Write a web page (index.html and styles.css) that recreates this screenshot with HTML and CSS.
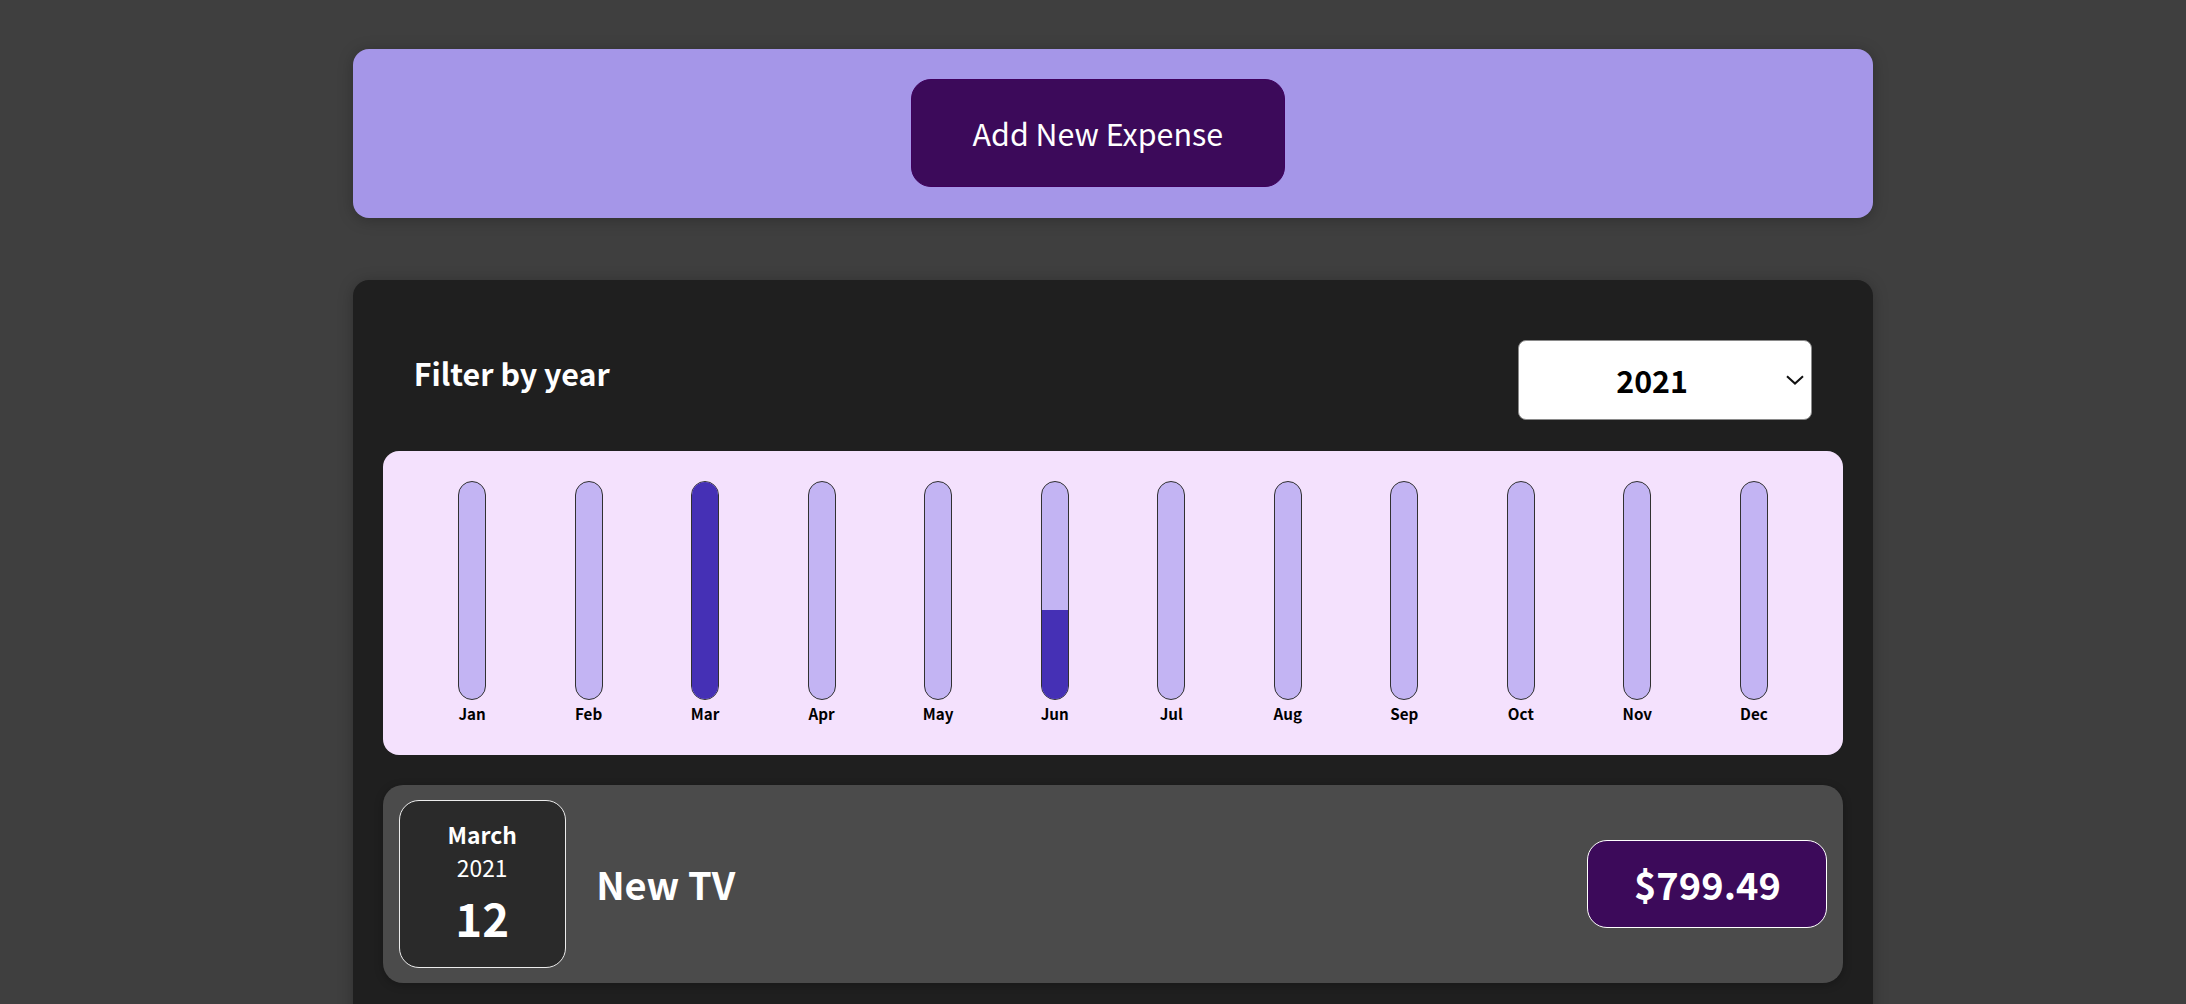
FILE: index.html
```html
<!DOCTYPE html>
<html lang="en">
<head>
<meta charset="utf-8">
<title>Expenses</title>
<link rel="stylesheet" href="styles.css">
</head>
<body>
<div class="new-expense">
  <button class="new-expense__btn" type="button">Add New Expense</button>
</div>

<div class="expenses">
  <div class="expenses-filter">
    <div class="expenses-filter__control">
      <label class="expenses-filter__label">Filter by year</label>
      <div class="year-select">
        <span class="year-select__value">2021</span>
        <svg class="year-select__chevron" width="18" height="10" viewBox="0 0 18 10"><path d="M1 1.2 L9 8.6 L17 1.2" fill="none" stroke="#111" stroke-width="2"/></svg>
      </div>
    </div>
  </div>

  <div class="chart">
    <div class="chart-bar"><div class="chart-bar__inner"><div class="chart-bar__fill" style="height:0%"></div></div><div class="chart-bar__label">Jan</div></div>
    <div class="chart-bar"><div class="chart-bar__inner"><div class="chart-bar__fill" style="height:0%"></div></div><div class="chart-bar__label">Feb</div></div>
    <div class="chart-bar"><div class="chart-bar__inner"><div class="chart-bar__fill" style="height:100%"></div></div><div class="chart-bar__label">Mar</div></div>
    <div class="chart-bar"><div class="chart-bar__inner"><div class="chart-bar__fill" style="height:0%"></div></div><div class="chart-bar__label">Apr</div></div>
    <div class="chart-bar"><div class="chart-bar__inner"><div class="chart-bar__fill" style="height:0%"></div></div><div class="chart-bar__label">May</div></div>
    <div class="chart-bar"><div class="chart-bar__inner"><div class="chart-bar__fill" style="height:41%"></div></div><div class="chart-bar__label">Jun</div></div>
    <div class="chart-bar"><div class="chart-bar__inner"><div class="chart-bar__fill" style="height:0%"></div></div><div class="chart-bar__label">Jul</div></div>
    <div class="chart-bar"><div class="chart-bar__inner"><div class="chart-bar__fill" style="height:0%"></div></div><div class="chart-bar__label">Aug</div></div>
    <div class="chart-bar"><div class="chart-bar__inner"><div class="chart-bar__fill" style="height:0%"></div></div><div class="chart-bar__label">Sep</div></div>
    <div class="chart-bar"><div class="chart-bar__inner"><div class="chart-bar__fill" style="height:0%"></div></div><div class="chart-bar__label">Oct</div></div>
    <div class="chart-bar"><div class="chart-bar__inner"><div class="chart-bar__fill" style="height:0%"></div></div><div class="chart-bar__label">Nov</div></div>
    <div class="chart-bar"><div class="chart-bar__inner"><div class="chart-bar__fill" style="height:0%"></div></div><div class="chart-bar__label">Dec</div></div>
  </div>

  <div class="expense-item">
    <div class="expense-date">
      <div class="expense-date__month">March</div>
      <div class="expense-date__year">2021</div>
      <div class="expense-date__day">12</div>
    </div>
    <div class="expense-item__description">
      <h2 class="expense-item__title">New TV</h2>
      <div class="expense-item__price">$799.49</div>
    </div>
  </div>
</div>
</body>
</html>
```

FILE: styles.css
```css
* {
  box-sizing: border-box;
}

html {
  font-family: "Noto Sans CJK JP", "Noto Sans", sans-serif;
  font-size: 30.4px;
}

body {
  margin: 0;
  background-color: #3f3f3f;
  overflow: hidden;
}

.new-expense {
  background-color: #a596e8;
  padding: 1rem;
  margin: 49px 0 0 353px;
  width: 1520px;
  border-radius: 16px;
  text-align: center;
  box-shadow: 0 2px 15px rgba(0, 0, 0, 0.25);
}

.new-expense__btn {
  font: inherit;
  cursor: pointer;
  padding: 1rem 2rem;
  border: 1px solid #40005d;
  background-color: #3c0a5a;
  color: white;
  border-radius: 20px;
  margin-right: 1rem;
  line-height: 45px;
  vertical-align: top;
}

.expenses {
  padding: 1rem;
  background-color: #1f1f1f;
  margin: 62px 0 0 353px;
  width: 1520px;
  border-radius: 16px;
  box-shadow: 0 2px 15px rgba(0, 0, 0, 0.25);
}

.expenses-filter {
  color: white;
  padding: 0 1rem;
}

.expenses-filter__control {
  display: flex;
  width: 100%;
  align-items: center;
  justify-content: space-between;
  margin: 1rem 0;
}

.expenses-filter__label {
  font-weight: bold;
  margin-bottom: 0.5rem;
}

.year-select {
  display: flex;
  align-items: center;
  width: 294px;
  height: 80px;
  padding: 0 7px 0 97px;
  background-color: #fff;
  color: #000;
  border: 1px solid #8a8a8a;
  border-radius: 8px;
  font-weight: bold;
}

.year-select__value {
  flex: 1;
}

.year-select__chevron {
  display: block;
}

.chart {
  padding: 1rem;
  border-radius: 16px;
  background-color: #f4e1fd;
  text-align: center;
  display: flex;
  justify-content: space-around;
  height: 10rem;
}

.chart-bar {
  height: 100%;
  flex: 1;
  display: flex;
  flex-direction: column;
  align-items: center;
}

.chart-bar__inner {
  height: 220px;
  width: 28px;
  border: 1px solid #313131;
  border-radius: 14px;
  background-color: #c3b4f3;
  overflow: hidden;
  display: flex;
  flex-direction: column;
  justify-content: flex-end;
}

.chart-bar__fill {
  background-color: #4530b5;
  width: 100%;
}

.chart-bar__label {
  font-weight: bold;
  font-size: 0.5rem;
  margin-top: 2px;
  color: #000;
}

.expense-item {
  display: flex;
  justify-content: space-between;
  align-items: center;
  box-shadow: 0 2px 8px rgba(0, 0, 0, 0.25);
  padding: 0.5rem;
  margin: 1rem 0;
  border-radius: 20px;
  background-color: #4b4b4b;
}

.expense-date {
  display: flex;
  flex-direction: column;
  width: 5.5rem;
  height: 5.5rem;
  border: 1px solid #ececec;
  background-color: #2a2a2a;
  color: white;
  border-radius: 20px;
  align-items: center;
  justify-content: center;
}

.expense-date__month {
  font-size: 0.75rem;
  font-weight: bold;
}

.expense-date__year {
  font-size: 0.75rem;
}

.expense-date__day {
  font-size: 1.5rem;
  font-weight: bold;
}

.expense-item__description {
  display: flex;
  flex-direction: row;
  align-items: center;
  justify-content: flex-start;
  flex: 1;
}

.expense-item__title {
  color: white;
  font-size: 1.25rem;
  flex: 1;
  margin: 0 1rem;
}

.expense-item__price {
  font-size: 1.25rem;
  font-weight: bold;
  color: white;
  background-color: #3c0a5a;
  border: 1px solid white;
  padding: 0.5rem 1.5rem;
  border-radius: 20px;
}
```
